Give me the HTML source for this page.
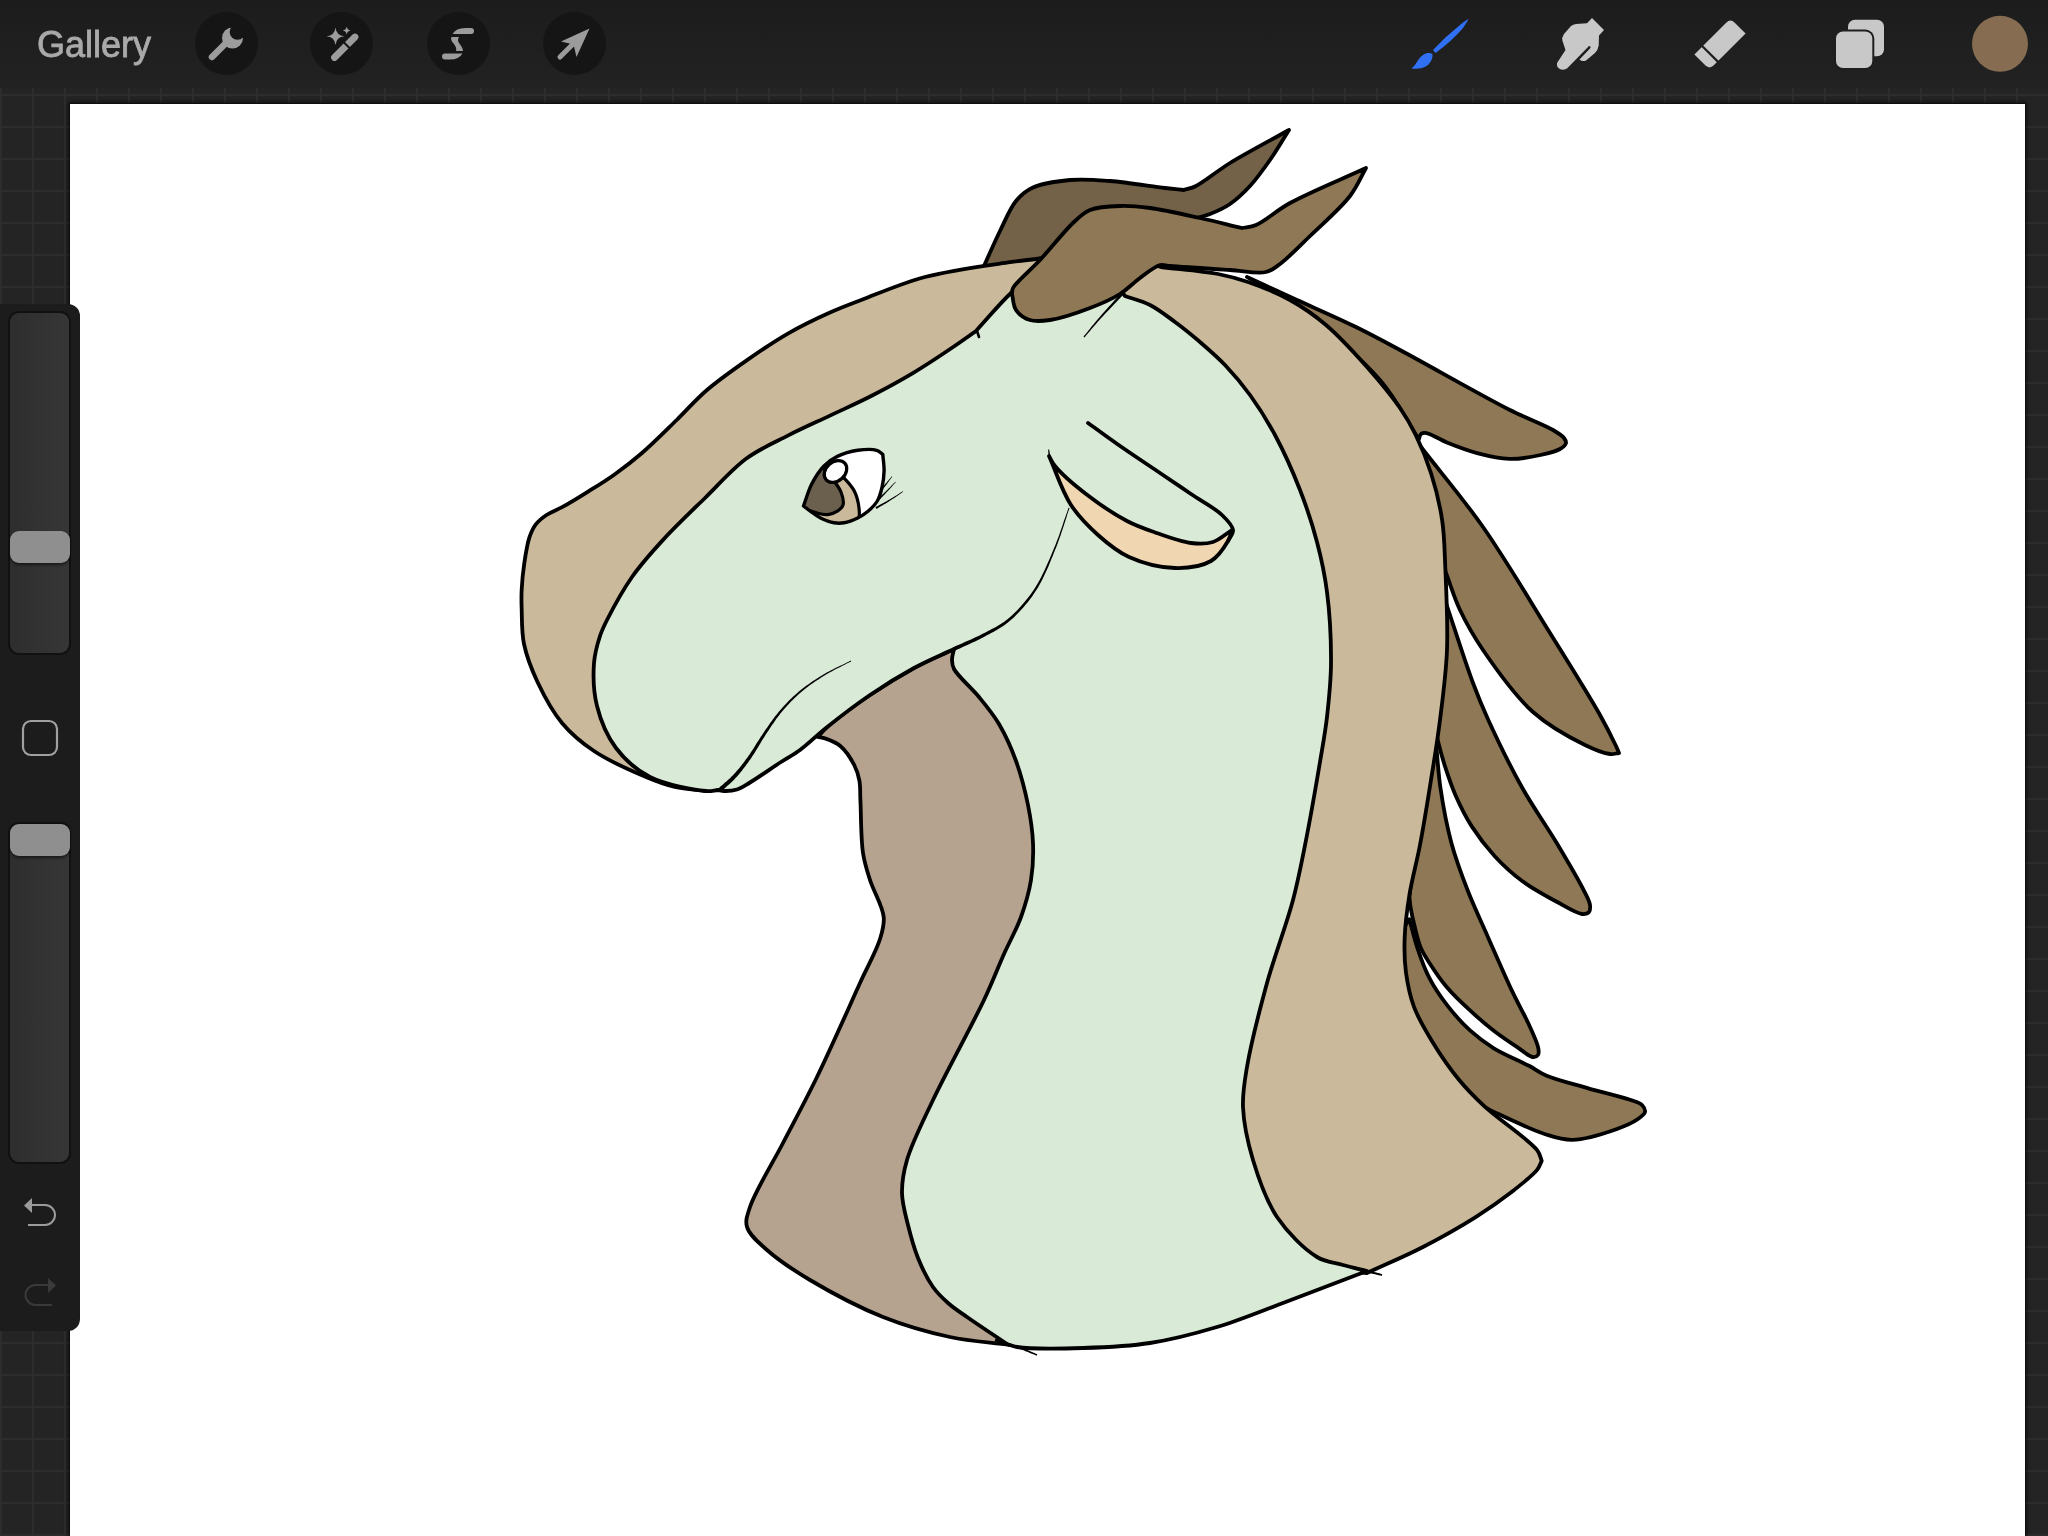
<!DOCTYPE html>
<html><head><meta charset="utf-8">
<style>
html,body{margin:0;padding:0;}
body{width:2048px;height:1536px;overflow:hidden;position:relative;background:#242424;font-family:"Liberation Sans",sans-serif;}
#grid{position:absolute;left:0;top:0;width:2048px;height:1536px;
 background-image:linear-gradient(to right,#2d2d2d 0,#2d2d2d 2px,transparent 2px),linear-gradient(to bottom,#2d2d2d 0,#2d2d2d 2px,transparent 2px);
 background-size:32px 32px;background-position:0px 30px;}
#topbar{position:absolute;left:0;top:0;width:2048px;height:88px;background:linear-gradient(to bottom,#1c1c1c,#222222);}
#gallery{position:absolute;left:37px;top:25px;font-size:36px;color:#aaaaaa;letter-spacing:0px;line-height:40px;-webkit-text-stroke:0.8px #aaaaaa;will-change:transform;}
.tb{position:absolute;top:12px;width:63px;height:63px;border-radius:50%;background:#151515;}
#canvas{position:absolute;left:70px;top:104px;width:1955px;height:1440px;background:#fff;box-shadow:0 0 0 1px #0e0e0e, 0 0 4px 2px rgba(0,0,0,.55);}
#side{position:absolute;left:0;top:304px;width:80px;height:1027px;background:#1c1c1c;border-radius:0 12px 12px 0;}
.track{position:absolute;left:10px;width:59px;border-radius:9px;background:linear-gradient(to right,#2e2e2e,#363636);box-shadow:0 0 0 2px #111;}
.thumb{position:absolute;left:10px;width:60px;height:32px;border-radius:9px;background:#8f8f8f;box-shadow:0 2px 3px rgba(0,0,0,.5);}
svg{position:absolute;left:0;top:0;}
</style></head>
<body>
<div id="grid"></div>
<div id="canvas"></div>
<svg width="2048" height="1536" viewBox="0 0 2048 1536" style="left:0;top:0">
<g stroke-linejoin="round" stroke-linecap="round">
<path d="M984 266 C989.3 254.3 994.5 242.1 1000 231 C1005.2 220.5 1009.8 208.5 1016 201 C1020.8 195.2 1025 191.3 1032 188 C1041.6 183.4 1057.1 181.2 1070 180 C1083.1 178.8 1095.6 179.9 1110 181 C1126.9 182.3 1151.4 186.4 1165 188 C1173 188.9 1177.7 189.3 1184 190 C1188 188.7 1191.2 188.4 1196 186 C1204.7 181.7 1216.9 171.1 1230 163 C1246.8 152.7 1269.3 141 1289 130 C1282.7 140 1276.6 150.5 1270 160 C1263.6 169.1 1257 178.4 1250 186 C1243.6 192.9 1237 199.2 1230 204 C1223.6 208.4 1215.6 211.8 1210 214 C1206.2 215.5 1204.4 215.6 1200 217 C1191.1 219.8 1173.3 225.7 1160 230 C1140 240.7 1123.3 253.9 1100 262 C1071.6 271.9 1018.5 285.1 1000 280 C991.6 277.7 989.3 270.7 984 266 Z" fill="#736148" stroke="#000" stroke-width="3.8"/>
<path d="M1247 277 C1263.7 284.7 1279.6 292 1297 300 C1315.8 308.6 1337.9 318.1 1356 327 C1371.9 334.8 1382.1 340.4 1400 350 C1428.4 365.1 1481 395.4 1509.4 409.7 C1527 418.6 1543.5 424.4 1553 430 C1558.1 433 1561.9 435.3 1564 438 C1565.3 439.7 1566.3 441.4 1566 443 C1565.6 445.1 1562.9 447.3 1560 449 C1555.6 451.7 1547.9 453.4 1540.6 455 C1531.5 457 1519.8 459.2 1509.4 458.9 C1499 458.6 1488.4 456.1 1478.1 453.4 C1467.6 450.7 1456.1 446.2 1446.9 442.5 C1439.3 439.4 1431.3 433.8 1426.6 433.1 C1424.2 432.8 1422.3 433 1421 434 C1419.7 435 1419.5 437.6 1418.8 439.4 C1405.8 419.6 1396.9 399.5 1380 380 C1359.3 356.2 1324.6 328.2 1300 310 C1281.1 296 1264.7 288 1247 277 Z" fill="#8e7855" stroke="#000" stroke-width="3.8"/>
<path d="M1421 447 C1441.7 473.7 1462.6 497.9 1483 527 C1505.7 559.4 1529.4 599.9 1550 633 C1568 662 1588.2 694 1600 715 C1607.1 727.6 1612.8 739.3 1616 746 C1617.5 749.1 1618 750.7 1619 753 C1616 753.3 1613.7 754.4 1610 754 C1603.7 753.3 1594.5 749.7 1585 745 C1570.5 737.9 1549.1 726.4 1533 712 C1514.7 695.7 1495.9 668.9 1483 650 C1473.2 635.6 1466.3 623.3 1460 610 C1454.2 597.7 1450.7 585.3 1446 573 C1437.3 548.7 1423.7 522.7 1420 500 C1416.9 481.2 1420.7 464.7 1421 447 Z" fill="#8e7855" stroke="#000" stroke-width="3.8"/>
<path d="M1446 603 C1455 629.7 1464.9 661.5 1473 683 C1478.5 697.8 1481.9 705.9 1488.3 720 C1497.2 739.4 1510.6 767.1 1522.5 788.3 C1533.5 807.8 1546.1 825.3 1556.7 843 C1566.5 859.4 1578.4 879.4 1584 890.8 C1587 896.8 1589.5 901 1590 905 C1590.3 907.7 1590.3 910.5 1589 912 C1587.7 913.5 1585 914.3 1582 914 C1576.1 913.5 1565.7 906.6 1556.7 901.8 C1546 896 1532.9 889 1522.5 881.3 C1512.5 873.9 1503.6 865.7 1495.2 856.7 C1486.7 847.5 1478.6 837 1471.9 826.6 C1465.4 816.5 1460.1 805.7 1455.5 795.2 C1451.1 785.2 1447.7 774.7 1444.6 765.1 C1441.9 756.5 1439.2 746.2 1437.8 740.5 C1437.1 737.5 1436.9 736 1436.4 733.7 C1430.9 705.8 1416.3 673.4 1420 650 C1422.9 631.5 1437.3 618.7 1446 603 Z" fill="#8e7855" stroke="#000" stroke-width="3.8"/>
<path d="M1436.4 747.3 C1437.8 761 1438.3 773.7 1440.5 788.3 C1443 805.3 1446.7 825.5 1451.4 843 C1455.9 859.6 1461.7 875.1 1467.8 890.8 C1473.9 906.4 1480.9 921 1487.9 936.9 C1495.4 953.9 1504 973.9 1511.4 989.6 C1517.5 1002.6 1524.2 1014.2 1529 1024.8 C1532.8 1033.3 1537.4 1042.8 1538.3 1048.3 C1538.8 1051.1 1539 1053.6 1538 1055 C1537.1 1056.3 1535.1 1057.2 1533 1057 C1529.1 1056.7 1522.9 1050.9 1517.2 1047.1 C1510.1 1042.4 1501.5 1036.6 1493.8 1030.7 C1485.8 1024.5 1478 1017.8 1470.3 1010.7 C1462.3 1003.4 1453.8 995.5 1446.9 987.3 C1440.3 979.5 1433.9 969.9 1429.3 962.7 C1425.9 957.4 1423.4 953.9 1421.1 948.6 C1418.5 942.7 1416.9 935.5 1415.2 928.7 C1413.4 921.8 1411.6 913.5 1410.6 907.6 C1409.9 903.5 1409.8 900.5 1409.4 897 C1412.9 864.7 1414.3 827.2 1420 800 C1424.3 779.5 1430.9 764.9 1436.4 747.3 Z" fill="#8e7855" stroke="#000" stroke-width="3.8"/>
<path d="M1409.4 919.3 C1412.1 929.1 1414.3 938.9 1417.6 948.6 C1420.9 958.5 1424.5 968.6 1429.3 977.9 C1434.2 987.3 1440.2 996.3 1446.9 1004.9 C1453.8 1013.9 1462.1 1023.3 1470.3 1030.7 C1477.8 1037.5 1484.9 1042.8 1493.8 1048.3 C1504.1 1054.6 1519.3 1060.7 1529 1065.8 C1536 1069.5 1539.3 1072.7 1546.7 1075.8 C1557.5 1080.4 1574.4 1084.3 1588.3 1088.3 C1602.2 1092.3 1620.4 1096.4 1630 1099.8 C1635.3 1101.7 1639.5 1102.5 1642 1105 C1643.9 1106.9 1645.4 1109.8 1645 1112 C1644.5 1114.5 1641.2 1116.7 1638 1119 C1633 1122.5 1625 1126.1 1616.3 1129.2 C1604.4 1133.4 1585.2 1139.6 1572.4 1139.8 C1562.5 1140 1556.1 1137.7 1546 1134.5 C1531.2 1129.9 1503.6 1116.4 1493.3 1111.6 C1489 1109.6 1487.2 1108.5 1484.2 1107 C1456.1 1088 1417.2 1074.8 1400 1050 C1384.2 1027.2 1376.3 990.2 1380 967 C1383 948.2 1399.6 935.2 1409.4 919.3 Z" fill="#8e7855" stroke="#000" stroke-width="3.8"/>
<path d="M818 737 C820.3 737.5 822.3 737.5 825 738.4 C829.3 739.9 836 742.3 840.6 746.2 C845.9 750.8 851 758.8 854.2 765 C856.9 770.2 858.4 775 859.4 780.6 C860.5 786.6 860 791.9 860.4 800 C861.1 813.3 860.8 838.4 863 853 C864.6 863.6 867 870.4 870 880 C873.6 891.4 882.7 906.1 883.7 917 C884.5 925.2 882.6 930.6 880 939 C876.2 951.4 867.9 965.6 860 983 C848.4 1008.5 830.8 1048.6 817 1077 C805.3 1101.1 794.3 1121.2 783 1143 C771.9 1164.5 755 1191.4 750 1207 C747.3 1215.3 745.1 1220.5 747 1227 C749.3 1235 758.5 1242.4 767 1250 C778.2 1260 793.4 1270.1 810 1280 C830.8 1292.4 858.8 1307.3 883 1317 C905.4 1325.9 928.1 1332.3 950 1337 C970.4 1341.4 990 1342.3 1010 1345 C1040 1280 1082.3 1230.8 1100 1150 C1125.7 1033.1 1152.3 773.7 1100 700 C1069.3 656.8 1002.7 666 954 649 C940.7 655.3 927.5 660.7 914 668 C899.5 675.9 884.4 685.2 870 695 C855.1 705.1 834.6 720.1 826 728 C822 731.7 820.7 734 818 737 Z" fill="#b5a38f" stroke="#000" stroke-width="3.8"/>
<path d="M706 791 C695.7 789.7 685 789.4 675 787 C665 784.7 656.9 781.6 646 777 C631 770.7 608.7 760.9 594 751 C581.4 742.6 571.2 734.1 562 723 C552.2 711.3 544 695.7 537.5 682 C531.6 669.4 526.6 656.5 524 644 C521.6 632.5 522 619.9 521.7 610 C521.4 602.3 521.3 596.6 521.7 589.3 C522.1 581.1 523 571.9 524.3 563.2 C525.6 554.5 527.1 544.2 529.5 537.2 C531.3 532 533.1 527.9 536 524.2 C538.8 520.5 542.5 517.7 546.5 515 C551 512 556.3 510.4 562.1 507.2 C569.7 503 579.5 497 588.1 491.6 C596.8 486.2 605.5 480.9 614.2 474.7 C623.5 468.1 632.4 461.3 642 453 C653.2 443.4 665.8 430.6 676.7 420 C686.7 410.3 694.3 401 705 391.7 C717.2 381.1 732.6 370.2 746.7 360.4 C760.4 350.8 774.2 341.4 788.3 333.3 C802 325.5 817 318.3 830 312.5 C841.1 307.5 848.9 304.7 861.2 300 C878.7 293.4 901.9 283.1 925 277 C951 270.1 989.8 265.2 1010 262.2 C1021.1 260.5 1027.3 260.1 1036 259 C1057.3 256 1079.1 248.6 1100 250 C1120.7 251.4 1140.7 261.3 1161 267 C1180 269.3 1202.1 270.9 1218 274 C1229.7 276.3 1237.3 278.3 1248 282 C1261 286.5 1276.9 292.7 1290 300 C1302.8 307.1 1314.1 314.9 1326 325 C1339.8 336.7 1354.4 352.8 1367 367 C1378.9 380.5 1391.4 395.5 1400 408 C1406.6 417.6 1410.7 424.8 1415.6 434.7 C1421.3 446.3 1426.9 460 1431.2 473.8 C1435.9 488.5 1439.9 504.9 1442.2 520.6 C1444.5 536.1 1444.5 549.7 1445.3 567.5 C1446.3 591.1 1448 623.7 1447 650 C1446 674.3 1442.8 697.6 1440 720 C1437.4 740.8 1434.3 759.6 1431 780 C1427.6 801.2 1423.9 824.8 1420 845 C1416.6 862.8 1412 879 1409.4 895 C1407.1 909.5 1405.2 923.5 1404.7 936.9 C1404.2 949.1 1404.4 960.5 1405.9 972.1 C1407.5 983.9 1409.8 995.8 1414.1 1007.2 C1418.6 1019.2 1425.6 1030.7 1432.8 1042.4 C1440.5 1055 1450.1 1068.9 1459.2 1080 C1467.4 1089.9 1474.2 1096.8 1484.5 1106.4 C1498.6 1119.5 1529.6 1140 1537.3 1150.3 C1540.4 1154.5 1540.2 1157.3 1541.7 1160.8 C1540.2 1163.7 1539.9 1166.3 1537.3 1169.6 C1532.4 1175.9 1520.5 1185 1510.9 1192.5 C1500.2 1200.8 1488.8 1208.8 1475.7 1217.1 C1460.1 1226.9 1441 1237.7 1423 1247 C1404.8 1256.4 1385.7 1264.3 1367 1273 C1311.3 1265.3 1237.6 1287.4 1200 1250 C1145.5 1195.8 1166.2 1020.6 1150 900 C1132.7 771.2 1170.2 537.6 1100 500 C1026.1 460.4 738.4 633 700 700 C682.6 730.3 704 760.7 706 791 Z" fill="#cbb99b" stroke="#000" stroke-width="3.8"/>
<path d="M718 790 C714 790.3 711.4 791.4 706 791 C694.1 790 665.6 785 650 777 C636.3 769.9 624.8 759.7 616 748 C607.1 736.1 600.6 720.4 597 706 C593.5 692.1 593.1 675.6 594 663 C594.8 652.9 597.5 643.7 600 636 C602 629.9 603.7 626.5 607 620 C612.6 609 622.6 590.5 632 577 C641.3 563.7 651.8 552.1 663.3 539.6 C675.9 525.8 691 511.6 705 498 C718.8 484.5 732.1 469 746.7 458.3 C760 448.6 774.3 442.6 788.3 435.4 C802.1 428.3 816.1 422.2 830 415.6 C843.9 409 857.9 402.9 871.7 395.8 C885.7 388.6 899.6 381.1 913.3 372.9 C927.3 364.5 943.5 353.6 955 345.8 C963.3 340.2 969 335.9 976 331 C987.7 318.3 999.5 303.7 1011 293 C1020.8 283.9 1027.7 274.9 1040 270 C1055.7 263.8 1085.4 258.7 1100 265 C1111.9 270.1 1116.7 285.7 1125 296 C1133.3 299 1141.9 300.9 1150 305 C1158.6 309.4 1166.8 315.9 1175 322 C1183.5 328.2 1191.8 335 1200 342 C1208.5 349.3 1216.9 356.5 1225 365 C1233.6 374.1 1242 384 1250 395 C1258.8 407.1 1267.1 420.3 1275 435 C1283.9 451.6 1292.9 471.7 1300 490 C1306.8 507.4 1312.5 524.7 1317 542 C1321.4 558.7 1324.7 573.7 1327 592 C1329.8 613.7 1331.2 641.8 1331 664 C1330.8 683 1328.9 700.1 1327 717 C1325.2 732.7 1322.8 745.2 1320 762 C1316.4 783.4 1311.6 811.4 1307 835 C1302.6 857.3 1299 877.2 1293 900 C1286.1 926.1 1274.7 955.1 1267 983 C1259.4 1010.8 1250.9 1044 1247 1067 C1244.4 1082.7 1242.4 1092.8 1243 1107 C1243.7 1123.5 1247.7 1142.3 1253 1160 C1258.7 1179 1266 1200.6 1277 1217 C1287.6 1232.7 1304.2 1249.3 1317 1257 C1325.9 1262.4 1334.5 1262.6 1343 1265 C1351.1 1267.3 1359 1269 1367 1271 C1339 1281.7 1309.3 1293.2 1283 1303 C1259.7 1311.7 1239.3 1320.3 1217 1327 C1194.9 1333.6 1172.5 1339.5 1150 1343 C1127.8 1346.5 1105.3 1347.3 1083 1348 C1060.9 1348.7 1029.3 1348.9 1017 1347 C1012.1 1346.2 1010.3 1345 1007 1344 C993.7 1335 977.8 1324.6 967 1317 C959.4 1311.7 953.7 1308.1 948 1303 C942.5 1298.1 937.6 1293.5 933 1287 C927.4 1279.1 922.1 1268.2 918 1258 C913.8 1247.5 910.7 1236 908 1225 C905.4 1214.3 902.2 1203.8 902 1193 C901.8 1182.1 903.4 1172.4 907 1160 C912 1142.7 922.5 1122.4 933 1100 C946.8 1070.7 971.2 1027.1 984 1000 C992.5 981.9 997.5 968.5 1004 954 C1009.8 941 1016.5 929.5 1021 917 C1025.4 904.8 1029 892.4 1031 880 C1033 867.8 1033.5 855.4 1033 843 C1032.5 830.4 1030.6 818 1028 805 C1025.1 790.8 1021 774.8 1016 761 C1011.3 747.9 1005.5 735.1 999 724 C993.1 714 986.3 705.9 979 697 C971.3 687.6 957.7 676.1 954 669 C952.2 665.5 952.1 663.2 952 660 C951.9 656.5 953.3 652.7 954 649 C940.7 655.3 927.5 660.7 914 668 C899.5 675.9 884.4 685.2 870 695 C855.1 705.1 838.6 717.9 826 728 C816.1 735.9 808.2 744 800 750 C793.4 754.9 788.1 757.4 781 762 C771.9 767.9 758.2 777.6 750 782.5 C744.8 785.6 741.5 788.1 737 789.5 C732.8 790.8 727.5 791.1 724 791 C721.6 790.9 720 790.3 718 790 Z" fill="#d9ead7" stroke="#000" stroke-width="3.8"/>
<path d="M1012 294 C1012.3 292 1011.8 290.5 1013 288 C1016.2 281.7 1030.6 270.1 1040 260 C1050.8 248.4 1064.4 230.8 1074 222 C1080 216.5 1083.4 212.7 1090 210 C1098.1 206.7 1110 206.3 1120 206 C1130 205.7 1138.8 206.5 1150 208 C1164.6 209.9 1184.1 214.5 1200 218 C1214.6 221.2 1228 224.7 1242 228 C1246.7 227 1250.6 227.3 1256 225 C1265.1 221.2 1276.1 210.7 1290 203 C1310 192 1340.7 179.7 1366 168 C1360.7 177.3 1357.4 186.4 1350 196 C1340.2 208.8 1322.5 223.9 1310 236 C1299.4 246.3 1288.4 257.8 1280 264 C1274.7 267.9 1272 270.6 1266 272 C1257 274.1 1243.5 270.8 1230 270 C1212.5 268.9 1181.6 267 1170 266 C1165.3 265.6 1163.7 264.1 1160 265 C1154.3 266.4 1146.6 273.3 1140 278 C1133.2 282.9 1127.7 289.2 1120 294 C1111.3 299.4 1100.9 303.9 1090 308 C1077.8 312.7 1061.1 318.4 1050 320 C1042.3 321.1 1035.8 321.9 1030 320 C1024.6 318.3 1019 314.4 1016 310 C1013.1 305.7 1013.3 299.3 1012 294 Z" fill="#8e7855" stroke="#000" stroke-width="3.8"/>
<path d="M1084.5 337.4 L1085.8 335.8 L1087.1 334.3 L1088.4 332.7 L1089.8 331.2 L1091.1 329.6 L1092.4 328.1 L1093.7 326.5 L1095.1 325 L1096.4 323.4 L1097.8 321.8 L1099.2 320.2 L1100.7 318.6 L1102.4 316.7 L1104.2 314.8 L1106 312.8 L1107.8 310.9 L1109.7 308.9 L1111.6 306.9 L1113.5 304.9 L1115.4 302.9 L1117.3 300.9 L1119.2 298.9 L1121.1 296.9 L1123 294.9 L1121 293.1 L1119.2 295.1 L1117.4 297.2 L1115.5 299.2 L1113.7 301.3 L1111.8 303.4 L1109.9 305.4 L1108.1 307.4 L1106.3 309.5 L1104.5 311.5 L1102.7 313.5 L1101 315.5 L1099.3 317.4 L1097.9 319.1 L1096.5 320.7 L1095.2 322.3 L1093.8 324 L1092.5 325.5 L1091.2 327.1 L1090 328.7 L1088.7 330.3 L1087.4 331.9 L1086.1 333.4 L1084.8 335 L1083.5 336.6 Z" fill="#000"/>
<path d="M968 337 L977 331 L979 337" fill="none" stroke="#000" stroke-width="2.6"/>
<path d="M1049 456 C1056.3 472.3 1062 491.2 1071 505 C1078.8 516.9 1088.2 526.2 1098 535 C1107.5 543.5 1117.1 551.6 1129 557 C1142.3 563 1160.6 567.7 1175 568 C1187.7 568.3 1201.9 566.3 1211 561 C1218.7 556.5 1224.5 547 1228 541 C1230.3 537 1230.7 533.7 1232 530 C1225.7 534 1219.9 539.8 1213 542 C1206.2 544.1 1199.2 544 1191 543 C1180.2 541.7 1165.3 536 1154 532 C1144.2 528.6 1136.7 526.1 1127 521 C1114.5 514.4 1098.4 503.6 1086 494 C1074.6 485.2 1061 473.4 1055 466 C1051.8 462.1 1051 459.3 1049 456 Z" fill="#f0d7b2" stroke="#000" stroke-width="3.8"/>
<path d="M1088 423 C1099.7 431.3 1111.1 439.7 1123 448 C1135.1 456.4 1148.2 465 1160 473 C1170.8 480.3 1180.7 487 1191 494 C1201.3 501 1214.7 507.9 1222 515 C1227.2 520 1232.5 525.2 1233 530 C1233.4 533.8 1229.7 537.3 1228 541" fill="none" stroke="#000" stroke-width="3.8"/>
<path d="M1048.1 449.6 L1048.2 450.3 L1048.2 451 L1048.3 451.7 L1048.3 452.4 L1048.4 453.2 L1048.4 453.9 L1048.5 454.6 L1048.5 455.3 L1048.6 456.1 L1048.7 456.8 L1048.9 457.6 L1049.1 458.3 L1049.3 459.1 L1049.5 459.8 L1049.8 460.5 L1050.1 461.2 L1050.4 461.9 L1050.7 462.6 L1051.1 463.3 L1051.4 464 L1051.7 464.7 L1052.1 465.4 L1052.4 466 L1052.7 466.7 L1055.3 465.3 L1054.9 464.7 L1054.5 464 L1054.1 463.3 L1053.7 462.7 L1053.3 462.1 L1052.9 461.4 L1052.5 460.8 L1052.2 460.2 L1051.8 459.6 L1051.5 459 L1051.2 458.3 L1050.9 457.7 L1050.7 457.1 L1050.5 456.4 L1050.3 455.8 L1050.2 455.1 L1050 454.4 L1049.9 453.7 L1049.8 453 L1049.6 452.3 L1049.5 451.6 L1049.4 450.9 L1049.2 450.1 L1049.1 449.4 Z" fill="#000"/>
<path d="M1068.5 507.8 L1067.4 511.2 L1066.2 514.5 L1065.1 517.8 L1063.9 521.1 L1062.8 524.5 L1061.7 527.8 L1060.5 531.1 L1059.4 534.4 L1058.2 537.7 L1056.9 541.1 L1055.6 544.4 L1054.2 547.7 L1052.8 551.2 L1051.3 554.8 L1049.8 558.4 L1048.2 562 L1046.6 565.6 L1045 569.2 L1043.3 572.8 L1041.6 576.3 L1039.8 579.7 L1037.9 583 L1036 586.3 L1034 589.4 L1032.1 592.2 L1030.1 594.9 L1028 597.7 L1025.9 600.3 L1023.7 603 L1021.5 605.5 L1019.3 608 L1017 610.4 L1014.7 612.7 L1012.4 614.9 L1010.1 616.9 L1007.8 618.9 L1005.8 620.4 L1003.9 621.9 L1001.9 623.2 L999.9 624.5 L997.9 625.7 L995.9 626.9 L993.9 628 L991.8 629.1 L989.7 630.2 L987.6 631.3 L985.4 632.4 L983.2 633.5 L980.9 634.7 L978.5 635.9 L976 637.1 L973.5 638.3 L971 639.4 L968.5 640.5 L966 641.6 L963.4 642.8 L960.8 643.9 L958.3 645 L955.7 646.1 L953.2 647.3 L954.8 650.7 L957.3 649.5 L959.8 648.4 L962.3 647.2 L964.9 646.1 L967.4 644.9 L970 643.8 L972.5 642.6 L975 641.4 L977.5 640.2 L980 639 L982.4 637.7 L984.8 636.5 L986.9 635.3 L989.1 634.2 L991.2 633 L993.3 631.9 L995.4 630.7 L997.5 629.6 L999.5 628.3 L1001.6 627.1 L1003.6 625.7 L1005.6 624.3 L1007.6 622.7 L1009.6 621.1 L1012 619.1 L1014.3 616.9 L1016.6 614.6 L1018.9 612.2 L1021.2 609.8 L1023.5 607.2 L1025.7 604.6 L1027.9 601.9 L1030 599.2 L1032.1 596.4 L1034 593.5 L1036 590.6 L1038 587.4 L1039.9 584.1 L1041.7 580.7 L1043.4 577.2 L1045.1 573.6 L1046.8 570 L1048.4 566.4 L1049.9 562.7 L1051.4 559.1 L1052.9 555.4 L1054.3 551.8 L1055.8 548.3 L1057.1 545 L1058.3 541.6 L1059.5 538.2 L1060.7 534.9 L1061.8 531.5 L1062.9 528.2 L1064 524.9 L1065.1 521.5 L1066.2 518.2 L1067.2 514.8 L1068.3 511.5 L1069.5 508.2 Z" fill="#000"/>
<path d="M850.8 660.6 L848.6 661.7 L846.4 662.8 L844.2 663.9 L842 664.9 L839.8 666 L837.6 667 L835.4 668.1 L833.3 669.2 L831.1 670.3 L828.9 671.4 L826.8 672.6 L824.7 673.8 L822.6 675.1 L820.5 676.3 L818.4 677.6 L816.3 678.9 L814.2 680.3 L812.2 681.6 L810.2 683 L808.2 684.4 L806.2 685.8 L804.2 687.3 L802.3 688.8 L800.4 690.3 L798.6 691.8 L796.8 693.4 L795 694.9 L793.2 696.6 L791.5 698.2 L789.8 699.8 L788.1 701.5 L786.5 703.2 L784.8 705 L783.2 706.7 L781.7 708.5 L780.1 710.2 L778.6 712 L777.1 713.9 L775.6 715.7 L774.2 717.6 L772.8 719.5 L771.4 721.4 L770 723.3 L768.7 725.3 L767.4 727.2 L766 729.1 L764.7 731 L763.4 732.9 L762.1 734.9 L760.8 736.8 L759.6 738.7 L758.4 740.7 L757.1 742.6 L755.9 744.6 L754.7 746.5 L753.5 748.4 L752.3 750.3 L751.1 752.1 L749.9 754 L748.6 755.7 L747.4 757.4 L746.2 759 L745.1 760.6 L743.9 762.2 L742.7 763.8 L741.5 765.3 L740.2 766.9 L739 768.4 L737.8 769.8 L736.5 771.3 L735.3 772.7 L734 774.1 L732.8 775.4 L731.5 776.6 L730.3 777.9 L729 779.1 L727.7 780.2 L726.4 781.4 L725 782.6 L723.7 783.7 L722.4 784.9 L721 786.1 L719.7 787.3 L718.4 788.5 L721.2 791.5 L722.5 790.3 L723.8 789.1 L725.1 788 L726.4 786.8 L727.7 785.6 L729 784.4 L730.4 783.2 L731.7 781.9 L733 780.7 L734.3 779.4 L735.5 778.1 L736.8 776.7 L738.1 775.2 L739.4 773.7 L740.6 772.2 L741.9 770.7 L743.1 769.1 L744.3 767.5 L745.5 765.9 L746.7 764.3 L747.9 762.7 L749 761 L750.2 759.4 L751.4 757.7 L752.6 755.8 L753.9 753.9 L755.1 752 L756.3 750.1 L757.4 748.2 L758.6 746.2 L759.8 744.2 L761 742.3 L762.1 740.3 L763.3 738.4 L764.6 736.5 L765.8 734.6 L767.1 732.6 L768.4 730.7 L769.6 728.7 L770.9 726.8 L772.2 724.8 L773.6 722.9 L774.9 721 L776.2 719.1 L777.6 717.2 L779 715.4 L780.4 713.6 L781.9 711.8 L783.4 710 L784.9 708.2 L786.5 706.5 L788.1 704.7 L789.7 703 L791.3 701.3 L793 699.7 L794.6 698 L796.3 696.4 L798.1 694.8 L799.8 693.3 L801.6 691.7 L803.4 690.2 L805.3 688.7 L807.2 687.2 L809.1 685.8 L811.1 684.3 L813.1 682.9 L815.1 681.5 L817.1 680.2 L819.2 678.9 L821.2 677.5 L823.3 676.2 L825.3 675 L827.4 673.7 L829.5 672.5 L831.6 671.4 L833.8 670.2 L835.9 669.1 L838.1 668 L840.3 666.9 L842.5 665.8 L844.7 664.7 L846.8 663.6 L849 662.5 L851.2 661.4 Z" fill="#000"/>
<path d="M994.5 1341.4 L996.7 1342.1 L998.8 1342.7 L1001 1343.3 L1003.1 1343.9 L1005.3 1344.6 L1007.4 1345.2 L1009.6 1345.8 L1011.7 1346.4 L1013.7 1347.1 L1015.8 1347.7 L1017.7 1348.4 L1019.6 1349 L1021.2 1349.5 L1022.7 1350.1 L1024.1 1350.6 L1025.6 1351.2 L1027 1351.8 L1028.4 1352.3 L1029.8 1352.9 L1031.1 1353.4 L1032.5 1354 L1033.9 1354.6 L1035.3 1355.1 L1036.7 1355.7 L1037.3 1354.3 L1035.9 1353.7 L1034.5 1353.1 L1033.2 1352.5 L1031.8 1351.9 L1030.4 1351.3 L1029.1 1350.7 L1027.7 1350 L1026.3 1349.4 L1024.9 1348.8 L1023.4 1348.2 L1021.9 1347.6 L1020.4 1347 L1018.5 1346.3 L1016.5 1345.6 L1014.5 1344.9 L1012.4 1344.2 L1010.3 1343.5 L1008.2 1342.8 L1006.1 1342.1 L1003.9 1341.4 L1001.8 1340.7 L999.6 1340 L997.5 1339.3 L995.5 1338.6 Z" fill="#000"/>
<path d="M1354.6 1269.4 L1355.9 1269.8 L1357.1 1270.1 L1358.4 1270.4 L1359.7 1270.7 L1361 1271 L1362.3 1271.3 L1363.5 1271.6 L1364.8 1271.9 L1366 1272.3 L1367.3 1272.6 L1368.5 1272.8 L1369.7 1273.1 L1370.8 1273.4 L1371.8 1273.6 L1372.8 1273.9 L1373.8 1274.1 L1374.8 1274.3 L1375.8 1274.5 L1376.8 1274.8 L1377.8 1275 L1378.8 1275.2 L1379.8 1275.4 L1380.8 1275.6 L1381.8 1275.9 L1382.2 1274.1 L1381.2 1273.9 L1380.2 1273.6 L1379.3 1273.3 L1378.3 1273.1 L1377.3 1272.8 L1376.3 1272.5 L1375.3 1272.3 L1374.4 1272 L1373.4 1271.7 L1372.4 1271.4 L1371.3 1271.2 L1370.3 1270.9 L1369.1 1270.5 L1367.9 1270.2 L1366.7 1269.8 L1365.5 1269.5 L1364.2 1269.1 L1362.9 1268.8 L1361.7 1268.4 L1360.4 1268 L1359.2 1267.6 L1357.9 1267.3 L1356.6 1266.9 L1355.4 1266.6 Z" fill="#000"/>
<defs><clipPath id="eyeclip"><path d="M803.5 506 C806.2 498.7 808.2 490.8 811.7 484 C815.1 477.5 819.3 470.8 824 466 C828 461.9 832.2 458.9 837.4 456.4 C843.3 453.5 851 451.3 857.7 450.3 C864.1 449.4 872.3 448.9 876.7 450.3 C879.5 451.1 880.8 453 882.8 454.4 C883.2 459.8 884.2 465.1 884.1 470.6 C884 476.2 883.2 482.2 882 487.5 C880.9 492.3 879.7 497 877.3 501 C875 504.9 871.4 508.3 868 511.2 C864.8 513.9 861.5 516.1 857.7 518 C853.6 520 848.4 522.1 844.2 522.8 C840.6 523.4 837.6 523.4 834 522.8 C829.8 522.1 824.6 520 820.5 518 C816.7 516.1 813.3 513.4 810.3 511.2 C807.8 509.4 805.8 507.7 803.5 506 Z"/></clipPath></defs>
<path d="M803.5 506 C806.2 498.7 808.2 490.8 811.7 484 C815.1 477.5 819.3 470.8 824 466 C828 461.9 832.2 458.9 837.4 456.4 C843.3 453.5 851 451.3 857.7 450.3 C864.1 449.4 872.3 448.9 876.7 450.3 C879.5 451.1 880.8 453 882.8 454.4 C883.2 459.8 884.2 465.1 884.1 470.6 C884 476.2 883.2 482.2 882 487.5 C880.9 492.3 879.7 497 877.3 501 C875 504.9 871.4 508.3 868 511.2 C864.8 513.9 861.5 516.1 857.7 518 C853.6 520 848.4 522.1 844.2 522.8 C840.6 523.4 837.6 523.4 834 522.8 C829.8 522.1 824.6 520 820.5 518 C816.7 516.1 813.3 513.4 810.3 511.2 C807.8 509.4 805.8 507.7 803.5 506 Z" fill="#fff" stroke="none"/>
<path d="M826 462 C832.9 462.7 838.6 472.2 843.5 477.4 C847.8 481.9 851.7 485.9 854.3 491 C856.9 496.1 858.4 502.8 859 508 C859.5 512.3 860 516.1 858.4 520 C856.3 525.1 851.7 532.4 845 535 C835 538.8 808.5 538.6 800 530 C791.1 521 789.1 491.5 795 480 C800 470.3 817.4 461.2 826 462 Z" fill="#cbb99b" stroke="#000" stroke-width="3.2" clip-path="url(#eyeclip)"/>
<path d="M812 458 C817 457.3 825 469.9 830 476 C834.4 481.3 838.9 486.7 841 492 C842.7 496.4 844 501.6 843 505 C842.2 507.7 839.7 509.6 837.4 511.2 C834.8 512.9 831.3 514.3 828 514.6 C824.5 515 821 514.2 817 513 C811.8 511.4 803 509.8 800 505 C796.5 499.5 798 487.8 800 480 C802 472.2 807 458.7 812 458 Z" fill="#6b5f4e" stroke="#000" stroke-width="3.2" clip-path="url(#eyeclip)"/>
<ellipse cx="835.5" cy="471.5" rx="12.5" ry="9.5" transform="rotate(-42 835.5 471.5)" fill="#fff" stroke="#000" stroke-width="3.2"/>
<path d="M803.5 506 C806.2 498.7 808.2 490.8 811.7 484 C815.1 477.5 819.3 470.8 824 466 C828 461.9 832.2 458.9 837.4 456.4 C843.3 453.5 851 451.3 857.7 450.3 C864.1 449.4 872.3 448.9 876.7 450.3 C879.5 451.1 880.8 453 882.8 454.4 C883.2 459.8 884.2 465.1 884.1 470.6 C884 476.2 883.2 482.2 882 487.5 C880.9 492.3 879.7 497 877.3 501 C875 504.9 871.4 508.3 868 511.2 C864.8 513.9 861.5 516.1 857.7 518 C853.6 520 848.4 522.1 844.2 522.8 C840.6 523.4 837.6 523.4 834 522.8 C829.8 522.1 824.6 520 820.5 518 C816.7 516.1 813.3 513.4 810.3 511.2 C807.8 509.4 805.8 507.7 803.5 506 Z" fill="none" stroke="#000" stroke-width="3.4"/>
<path d="M876.5 508.9 L877.6 508.2 L878.8 507.5 L880 506.8 L881.1 506.1 L882.3 505.4 L883.4 504.8 L884.6 504.1 L885.8 503.4 L886.9 502.7 L888.1 502 L889.2 501.3 L890.3 500.5 L891.4 499.8 L892.5 499.1 L893.6 498.4 L894.7 497.7 L895.7 496.9 L896.8 496.2 L897.9 495.4 L898.9 494.7 L900 494 L901 493.2 L902.1 492.5 L903.2 491.8 L902.8 491.2 L901.7 491.9 L900.6 492.6 L899.6 493.3 L898.5 494 L897.4 494.7 L896.3 495.4 L895.2 496.1 L894.1 496.8 L893 497.5 L891.9 498.1 L890.8 498.8 L889.7 499.5 L888.5 500.1 L887.4 500.8 L886.2 501.4 L885 502.1 L883.8 502.7 L882.6 503.3 L881.5 504 L880.3 504.6 L879.1 505.2 L877.9 505.9 L876.7 506.5 L875.5 507.1 Z" fill="#000"/>
<path d="M879.6 499.6 L880.3 499 L880.9 498.3 L881.6 497.6 L882.2 496.9 L882.9 496.3 L883.5 495.6 L884.2 494.9 L884.8 494.2 L885.5 493.5 L886.1 492.8 L886.8 492.1 L887.4 491.4 L888.1 490.7 L888.8 489.9 L889.5 489.2 L890.2 488.4 L890.9 487.6 L891.6 486.9 L892.3 486.1 L893 485.3 L893.6 484.5 L894.3 483.7 L895 483 L895.7 482.2 L895.3 481.8 L894.6 482.5 L893.8 483.3 L893.1 484 L892.4 484.7 L891.6 485.5 L890.9 486.2 L890.2 487 L889.5 487.7 L888.7 488.4 L888 489.1 L887.3 489.9 L886.6 490.6 L885.9 491.2 L885.2 491.9 L884.5 492.6 L883.8 493.2 L883.1 493.9 L882.5 494.5 L881.8 495.1 L881.1 495.8 L880.4 496.4 L879.7 497.1 L879 497.7 L878.4 498.4 Z" fill="#000"/>
<path d="M882.6 489.5 L883 489 L883.4 488.5 L883.8 488 L884.2 487.5 L884.6 487 L885 486.5 L885.4 485.9 L885.8 485.4 L886.2 484.9 L886.6 484.4 L887 483.9 L887.4 483.3 L887.8 482.8 L888.2 482.3 L888.6 481.7 L889 481.1 L889.4 480.6 L889.8 480 L890.2 479.5 L890.6 478.9 L891 478.4 L891.4 477.8 L891.8 477.2 L892.2 476.7 L891.8 476.3 L891.3 476.8 L890.9 477.4 L890.5 477.9 L890 478.4 L889.6 479 L889.2 479.5 L888.7 480 L888.3 480.6 L887.9 481.1 L887.4 481.6 L887 482.1 L886.6 482.7 L886.1 483.1 L885.7 483.6 L885.3 484.1 L884.9 484.6 L884.4 485.1 L884 485.6 L883.6 486.1 L883.1 486.5 L882.7 487 L882.3 487.5 L881.8 488 L881.4 488.5 Z" fill="#000"/>
</g>
</svg>
<div id="topbar"></div>
<div id="gallery">Gallery</div>
<div class="tb" style="left:195px"></div>
<div class="tb" style="left:310px"></div>
<div class="tb" style="left:427px"></div>
<div class="tb" style="left:543px"></div>
<div id="side">
  <div class="track" style="top:9px;height:340px"></div>
  <div class="thumb" style="top:227px"></div>
  <div class="track" style="top:520px;height:338px"></div>
  <div class="thumb" style="top:520px"></div>
</div>
<svg width="2048" height="1536" viewBox="0 0 2048 1536" style="left:0;top:0;pointer-events:none">

<g fill="#9c9c9c">
 <!-- wrench -->
 <path d="M212 57 L229 40" stroke="#9c9c9c" stroke-width="6.5" stroke-linecap="round"/>
 <circle cx="232.5" cy="38" r="10.5"/>
 <circle cx="237.5" cy="32" r="7.8" fill="#151515"/>
 <!-- wand -->
 <path d="M334.5 57.5 L355 37" stroke="#9c9c9c" stroke-width="6.8" stroke-linecap="round"/>
 <path d="M342.5 41 L350.5 49" stroke="#151515" stroke-width="2"/>
 <path d="M335.5 27.5 Q336.3 35.5 344.5 36.3 Q336.3 37.1 335.5 45 Q334.7 37.1 326.5 36.3 Q334.7 35.5 335.5 27.5 Z"/>
 <path d="M346.7 26.5 Q347.2 30 350.7 30.5 Q347.2 31 346.7 34.5 Q346.2 31 342.7 30.5 Q346.2 30 346.7 26.5 Z"/>
 <!-- selection S -->
 <path d="M452.5 34 Q456 28 465 28 L471 28 A3 3 0 0 1 471 34 Z"/>
 <path d="M451.5 37 L459 37 Q457 40 459 43 Q463 48 463 51 L456 51 Q457 48 454 44 Q450 40 451.5 37 Z"/>
 <path d="M462.5 53.5 Q459 59.5 450 59.5 L445 59.5 A3 3 0 0 1 445 53.5 Z"/>
 <!-- arrow -->
 <path d="M560 57 L575 42" stroke="#9c9c9c" stroke-width="5" stroke-linecap="round"/>
 <path d="M589.5 28.5 L561 41.5 L573.5 44.5 L576.5 57 Z"/>
</g>
<!-- brush -->
<g fill="#3070f4">
 <path d="M1433 50 Q1446 36 1460 25 Q1466 20 1468.5 19 Q1467 22 1463 28 Q1452 41 1435.5 53 Z"/>
 <path d="M1432.5 54 Q1433 60 1428 65 Q1421 70 1411.5 68.5 Q1415 66 1417.5 61 Q1421 55 1427 53 Q1431 52.5 1432.5 54 Z"/>
</g>
<g fill="#c8c8c8">
 <!-- smudge -->
 <path d="M1592 18 L1604 30 L1599 35.5 L1598.7 45.5 Q1598 50 1595 53 L1586 60.5 Q1582 62 1579.5 59.5 L1590 48.5 Q1591.5 46 1589 46 L1567 68.5 Q1565 70 1561 69.5 Q1556.5 68 1557 63.5 Q1557.5 61.5 1559 60 L1565.5 50 L1562.5 41 Q1561.5 37.5 1564 34 L1571 26 Q1573 24.3 1576 24 L1587 23.3 Z"/>
 <!-- eraser -->
 <g transform="rotate(-45 1720 44)">
  <path d="M1707.2 33.3 L1739.5 33.3 Q1745.5 33.3 1745.5 39.3 L1745.5 54.7 L1700.5 54.7 Q1694.5 54.7 1694.5 48.7 L1694.5 33.3 Z" />
 </g>
 <!-- layers -->
 <rect x="1848" y="19.7" width="36" height="36.5" rx="7"/>
 <rect x="1833.8" y="29.5" width="40.5" height="40.5" rx="9" fill="#1e1e1e"/>
 <rect x="1836" y="31.5" width="36.3" height="36.5" rx="7"/>
</g>
<path d="M1706 32 L1706 56" stroke="#1f1f1f" stroke-width="2.2" transform="rotate(-45 1720 44)"/>
<circle cx="2000" cy="43.8" r="28" fill="#866c50"/>
<!-- sidebar icons -->
<rect x="23" y="721" width="34" height="34" rx="8" fill="none" stroke="#a0a0a0" stroke-width="2.2"/>
<g fill="none" stroke="#9b9b9b" stroke-width="2">
 <path d="M31 1205 L45 1205 A10 10 0 0 1 45 1225 L28 1225"/>
</g>
<path d="M24 1205.5 L32 1198 L32 1213 Z" fill="#9b9b9b"/>
<g fill="none" stroke="#3a3a3a" stroke-width="2">
 <path d="M49 1285 L35.5 1285 A10 10 0 0 0 35.5 1305 L52 1305"/>
</g>
<path d="M56 1285.5 L48 1278 L48 1293 Z" fill="#3a3a3a"/>

</svg>
</body></html>
